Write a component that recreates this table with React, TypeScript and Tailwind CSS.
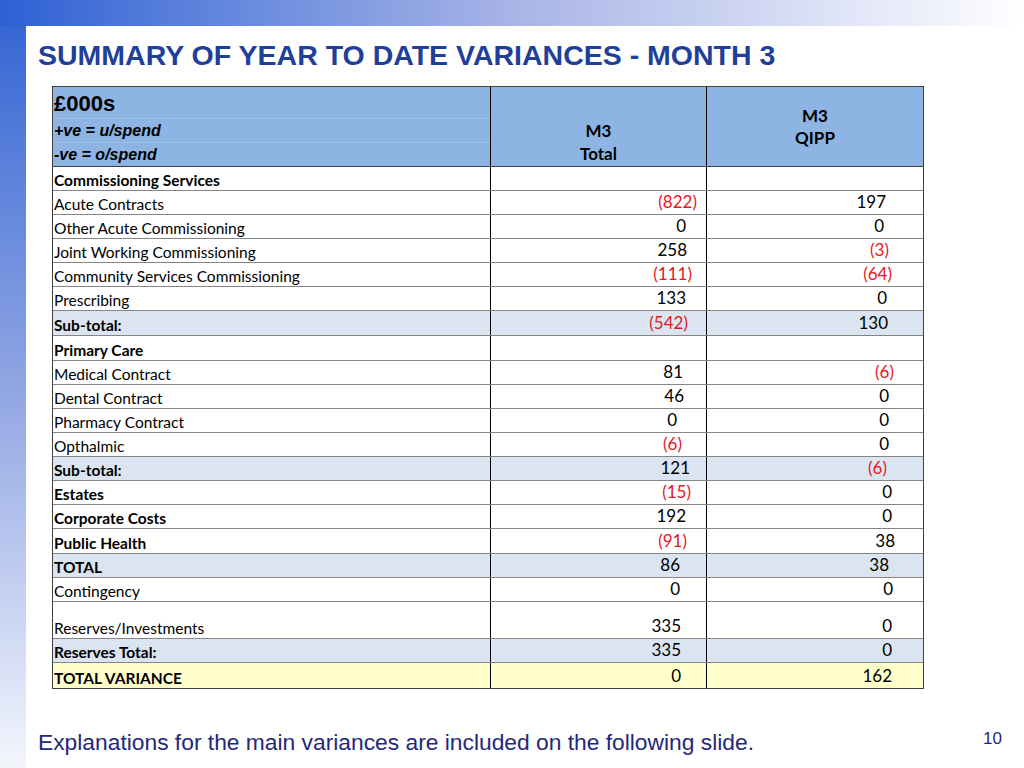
import React from 'react';

type Cell = [string, number] | null;

type Row = {
  label: string;
  bold?: boolean;
  tone?: 'sub' | 'total';
  h: number;
  a: Cell;
  b: Cell;
};

// [text, right padding]
const rows: Row[] = [
  { label: 'Commissioning Services', bold: true, h: 24, a: null, b: null },
  { label: 'Acute Contracts', h: 24, a: ['(822)', 9], b: ['197', 37] },
  { label: 'Other Acute Commissioning', h: 24, a: ['0', 20], b: ['0', 39] },
  { label: 'Joint Working Commissioning', h: 24, a: ['258', 19], b: ['(3)', 34] },
  { label: 'Community Services Commissioning', h: 24, a: ['(111)', 14], b: ['(64)', 31] },
  { label: 'Prescribing', h: 24, a: ['133', 20], b: ['0', 36] },
  { label: 'Sub-total:', bold: true, tone: 'sub', h: 25, a: ['(542)', 18], b: ['130', 35] },
  { label: 'Primary Care', bold: true, h: 25, a: null, b: null },
  { label: 'Medical Contract', h: 24, a: ['81', 23], b: ['(6)', 29] },
  { label: 'Dental Contract', h: 24, a: ['46', 22], b: ['0', 34] },
  { label: 'Pharmacy Contract', h: 24, a: ['0', 29], b: ['0', 34] },
  { label: 'Opthalmic', h: 24, a: ['(6)', 24], b: ['0', 34] },
  { label: 'Sub-total:', bold: true, tone: 'sub', h: 24, a: ['121', 16], b: ['(6)', 36] },
  { label: 'Estates', bold: true, h: 24, a: ['(15)', 15], b: ['0', 31] },
  { label: 'Corporate Costs', bold: true, h: 24, a: ['192', 20], b: ['0', 31] },
  { label: 'Public Health', bold: true, h: 25, a: ['(91)', 19], b: ['38', 28] },
  { label: 'TOTAL', bold: true, tone: 'sub', h: 24, a: ['86', 26], b: ['38', 34] },
  { label: 'Contingency', h: 24, a: ['0', 26], b: ['0', 30] },
  { label: 'Reserves/Investments', h: 37, a: ['335', 25], b: ['0', 31] },
  { label: 'Reserves Total:', bold: true, tone: 'sub', h: 24, a: ['335', 25], b: ['0', 31] },
  { label: 'TOTAL VARIANCE', bold: true, tone: 'total', h: 25, a: ['0', 25], b: ['162', 31] },
];

const lato = { fontFamily: 'Lato, "Noto Sans", sans-serif' };

const NumCell = ({ cell, className }: { cell: Cell; className: string }) => (
  <div className={`flex items-end justify-end pb-[2px] ${className}`}>
    {cell && (
      <span
        className={`text-[17px] leading-[20px] ${cell[0].startsWith('(') ? 'text-[#e3191f]' : 'text-black'}`}
        style={{ paddingRight: cell[1] }}
      >
        {cell[0]}
      </span>
    )}
  </div>
);

const App: React.FC = () => {
  return (
    <div className="w-[1024px] h-[768px] bg-white flex flex-col overflow-hidden" style={{ fontFamily: '"Liberation Sans", Arial, sans-serif' }}>
      <div className="h-[26px] shrink-0 bg-gradient-to-r from-[#2d60d4] via-[#a8b4e6] to-white" />
      <div className="flex flex-1">
        <div className="w-[26px] shrink-0 bg-gradient-to-b from-[#3767d4] via-[#93a7e3] to-[#f4f6fc]" />
        <div className="flex-1 flex flex-col">
          <h1 className="pl-[12px] pt-[15px] text-[28.5px] leading-[28px] font-bold text-[#1f3f9b]">
            SUMMARY OF YEAR TO DATE VARIANCES - MONTH 3
          </h1>

          <div className="ml-[26px] mt-[17px] w-[872px] border border-[#404040]" style={lato}>
            {/* header */}
            <div className="flex h-[80px] bg-[#8db4e2] border-b border-[#404040]">
              <div
                className="w-[437px] flex flex-col justify-end text-black"
                style={{ fontFamily: '"Liberation Sans", Arial, sans-serif' }}
              >
                <div className="h-[28px] leading-[28px] text-[22px] font-bold pl-[1px]">£000s</div>
                <div className="h-[24px] leading-[24px] text-[16px] font-bold italic pl-[1px] border-t border-[#a3c1e8]">+ve = u/spend</div>
                <div className="h-[24px] leading-[24px] text-[16px] font-bold italic pl-[1px] border-t border-[#a3c1e8]">-ve = o/spend</div>
              </div>
              <div className="w-[216px] border-l border-black flex flex-col items-center justify-end pb-[1px] text-[17px] leading-[23px] font-bold text-black">
                <span>M3</span>
                <span>Total</span>
              </div>
              <div className="flex-1 border-l border-black flex flex-col items-center justify-center pt-[1px] text-[17px] leading-[22px] font-bold text-black">
                <span>M3</span>
                <span>QIPP</span>
              </div>
            </div>

            {rows.map((r, i) => (
              <div
                key={i}
                className={`flex border-b border-[#858585] last:border-b-0 ${
                  r.tone === 'sub' ? 'bg-[#dbe5f1]' : r.tone === 'total' ? 'bg-[#ffffcc]' : 'bg-white'
                }`}
                style={{ height: r.h }}
              >
                <div
                  className={`w-[437px] flex items-end pl-[1px] pb-[1px] text-[15.5px] leading-[18px] text-black ${r.bold ? 'font-bold' : ''}`}
                >
                  {r.label}
                </div>
                <NumCell cell={r.a} className="w-[216px] border-l border-black" />
                <NumCell cell={r.b} className="flex-1 border-l border-black" />
              </div>
            ))}
          </div>

          <div className="mt-auto mb-[13px] flex justify-between items-start pl-[12px] pr-[22px]">
            <p className="text-[22.8px] leading-[26px] text-[#25287a]">
              Explanations for the main variances are included on the following slide.
            </p>
            <span className="text-[17px] leading-[20px] text-[#25287a]">10</span>
          </div>
        </div>
      </div>
    </div>
  );
};

export default App;
